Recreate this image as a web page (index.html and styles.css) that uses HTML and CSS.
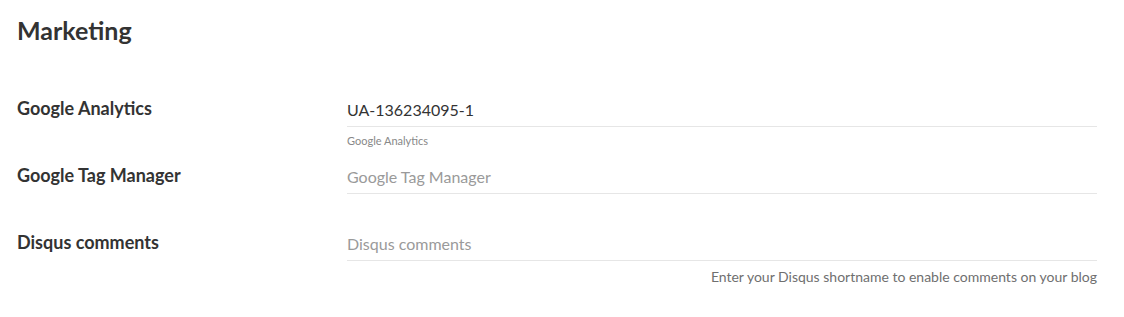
FILE: index.html
```html
<!DOCTYPE html>
<html lang="en">
<head>
<meta charset="utf-8">
<title>Marketing</title>
<link rel="stylesheet" href="styles.css">
</head>
<body>
<div class="page">
  <h1 class="title">Marketing</h1>
  <div class="form">
    <div class="row">
      <label class="label" for="ga">Google Analytics</label>
      <div class="field">
        <input id="ga" class="input" type="text" value="UA-136234095-1" placeholder="Google Analytics">
        <div class="hint hint-small">Google Analytics</div>
      </div>
    </div>
    <div class="row">
      <label class="label" for="gtm">Google Tag Manager</label>
      <div class="field">
        <input id="gtm" class="input" type="text" placeholder="Google Tag Manager">
      </div>
    </div>
    <div class="row">
      <label class="label" for="disqus">Disqus comments</label>
      <div class="field">
        <input id="disqus" class="input" type="text" placeholder="Disqus comments">
        <div class="hint hint-right">Enter your Disqus shortname to enable comments on your blog</div>
      </div>
    </div>
  </div>
</div>
</body>
</html>
```

FILE: styles.css
```css
* { box-sizing: border-box; }

html, body {
  margin: 0;
  padding: 0;
  background: #ffffff;
}

body {
  font-family: Lato, "Noto Sans", "Liberation Sans", sans-serif;
  color: #333333;
}

.page {
  padding: 15px 27px 0 17px;
}

.title {
  margin: 0;
  font-size: 25px;
  line-height: 30px;
  font-weight: 700;
  color: #333333;
}

.form {
  margin-top: 48px;
  display: flex;
  flex-direction: column;
}

.row {
  display: grid;
  grid-template-columns: 330px 1fr;
  min-height: 67px;
}

.label {
  margin-top: 4px;
  font-size: 18px;
  line-height: 22px;
  font-weight: 700;
  color: #333333;
}

.field {
  display: flex;
  flex-direction: column;
}

.input {
  display: block;
  width: 100%;
  height: 34px;
  margin: 0;
  padding: 0;
  border: none;
  border-bottom: 1px solid #e6e6e6;
  outline: none;
  background: transparent;
  font-family: inherit;
  font-size: 16px;
  color: #333333;
}

.input::placeholder {
  color: #9a9a9a;
  opacity: 1;
}

.hint {
  color: #777777;
}

.hint-small {
  margin-top: 7px;
  font-size: 11px;
  line-height: 13px;
  color: #888888;
}

.hint-right {
  margin-top: 8px;
  font-size: 14px;
  line-height: 16px;
  text-align: right;
  color: #6f6f6f;
}
```
